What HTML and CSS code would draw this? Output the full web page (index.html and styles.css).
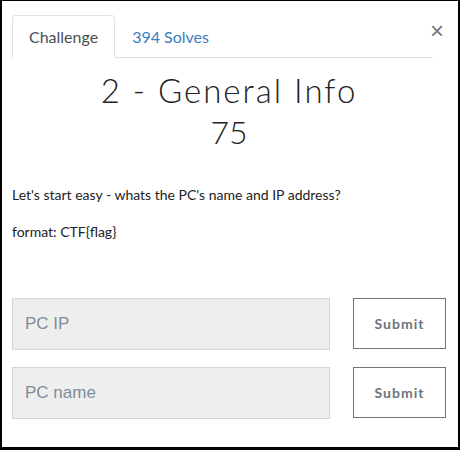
FILE: index.html
```html
<!DOCTYPE html>
<html lang="en">
<head>
    <meta charset="UTF-8">
    <meta name="viewport" content="width=device-width, initial-scale=1.0">
    <title>2 - General Info</title>
    <link rel="stylesheet" href="styles.css">
</head>
<body>
    <div class="modal">
        <div class="modal-head">
            <ul class="tabs">
                <li class="tab active">Challenge</li>
                <li class="tab">394 Solves</li>
            </ul>
            <button class="close">&times;</button>
        </div>
        <h2 class="title">2 - General Info</h2>
        <h3 class="points">75</h3>
        <div class="description">
            <p>Let's start easy - whats the PC's name and IP address?</p>
            <p>format: CTF{flag}</p>
        </div>
        <div class="flags">
            <div class="flag-row">
                <input class="flag-input" type="text" placeholder="PC IP">
                <button class="submit">Submit</button>
            </div>
            <div class="flag-row">
                <input class="flag-input" type="text" placeholder="PC name">
                <button class="submit">Submit</button>
            </div>
        </div>
    </div>
</body>
</html>
```

FILE: styles.css
```css
body {
    margin: 0;
    background-color: #000;
    font-family: Lato, "Open Sans", sans-serif;
}
.modal {
    background-color: #fff;
    margin: 1px 2px 3px 2px;
    height: 446px;
    box-sizing: border-box;
    padding: 14px 12px 0 10px;
}
.modal-head {
    display: flex;
    align-items: flex-start;
}
.tabs {
    flex: 1;
    display: flex;
    list-style: none;
    margin: 0;
    padding: 0;
    border-bottom: 1px solid #dee2e6;
}
.tab {
    padding: 0 16px;
    height: 41px;
    line-height: 42px;
    font-size: 16px;
    color: #3b7cc0;
    border: 1px solid transparent;
    border-radius: 4px 4px 0 0;
    margin-bottom: -1px;
}
.tab.active {
    color: #495057;
    border-color: #dee2e6;
    border-bottom-color: #fff;
    background-color: #fff;
}
.close {
    width: 13px;
    margin: 4px 0 0 0;
    padding: 0;
    border: none;
    background: none;
    font-family: Arial, sans-serif;
    font-size: 24px;
    line-height: 1;
    color: #777;
    cursor: pointer;
    position: relative;
    left: -3px;
}
.title {
    margin: 12px 0 0 0;
    text-align: center;
    font-weight: 300;
    font-size: 33px;
    line-height: 40px;
    letter-spacing: 2px;
    color: #222;
}
.points {
    margin: 2px 0 0 0;
    text-align: center;
    font-weight: 300;
    font-size: 32px;
    line-height: 40px;
    color: #222;
}
.description {
    margin-top: 34px;
    font-size: 14px;
    color: #222;
}
.description p {
    margin: 0 0 19px 0;
    line-height: 18px;
}
.flags {
    margin-top: 57px;
}
.flag-row {
    display: flex;
    justify-content: space-between;
    margin-bottom: 17px;
}
.flag-input {
    width: 318px;
    height: 52px;
    box-sizing: border-box;
    border: 1px solid #d3d5d8;
    background-color: #eee;
    padding: 0 12px;
    font-family: Arial, "Liberation Sans", sans-serif;
    font-size: 17px;
    color: #333;
}
.flag-input::placeholder {
    color: #7e8c9c;
}
.submit {
    width: 93px;
    height: 51px;
    border: 1px solid #6c757d;
    background-color: #fff;
    color: #6c757d;
    font-family: Lato, sans-serif;
    font-weight: bold;
    font-size: 14px;
    letter-spacing: 1px;
    cursor: pointer;
}
```
